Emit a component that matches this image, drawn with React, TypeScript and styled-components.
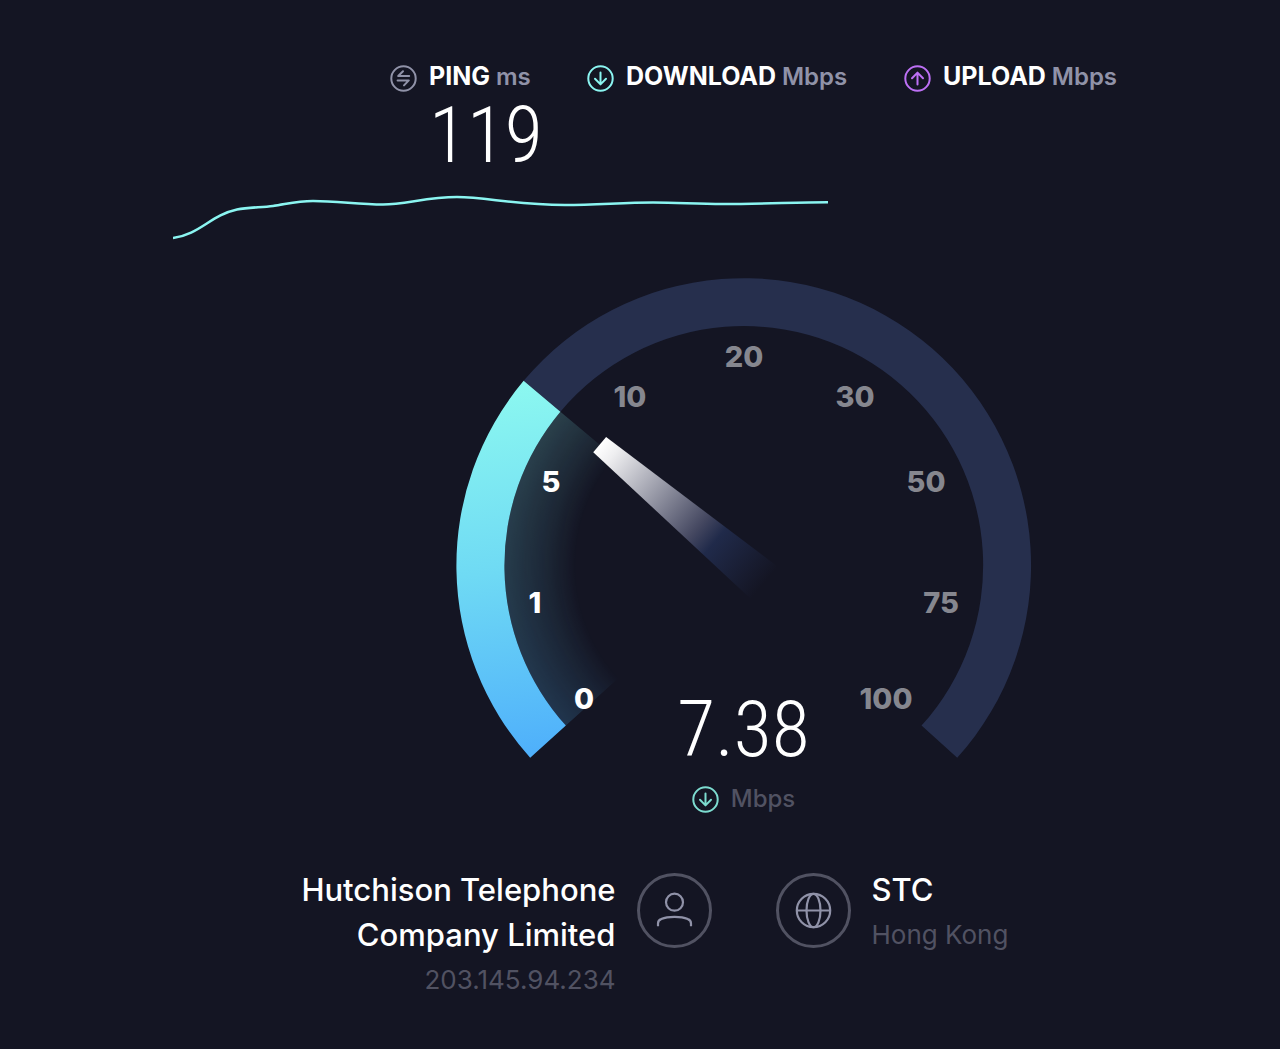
import React from "react";
import styled, { createGlobalStyle } from "styled-components";

const color = {
  bg: "#141523",
  white: "#ffffff",
  label: "#9092a8",
  muted: "#515262",
  track: "#262f4d",
  aqua: "#8bf5f1",
  teal: "#7ddcd0",
  violet: "#bd70f5",
  tick: "#86878f",
};

const GlobalStyle = createGlobalStyle`
  *, *::before, *::after { box-sizing: border-box; }
  body {
    margin: 0;
    background: ${color.bg};
    color: ${color.white};
    font-family: Inter, "Liberation Sans", sans-serif;
  }
`;

const Page = styled.main`
  display: flex;
  flex-direction: column;
  min-height: 100vh;
  padding-bottom: 40px;
  overflow: hidden;
`;

const Metrics = styled.section`
  display: grid;
  grid-template-columns: 197px 317px 213px;
  justify-content: center;
  padding: 61px 0 0 227px;
`;

const Metric = styled.div`
  display: grid;
  grid-template-columns: 27px auto;
  column-gap: 12px;
  justify-content: start;
  align-items: center;
  align-content: start;
  white-space: nowrap;

  svg {
    margin-top: 3px;
  }
`;

const MetricTitle = styled.h2`
  margin: 0;
  font-size: 25px;
  line-height: 30px;
  font-weight: 700;
`;

const MetricUnit = styled.span`
  color: ${color.label};
  font-size: 24px;
  font-weight: 600;
`;

const BigValue = styled.output`
  display: block;
  grid-column: 2;
  font-family: "Roboto Condensed", Roboto, sans-serif;
  font-size: 78px;
  line-height: 88px;
  font-weight: 300;
`;

const ChartArea = styled.section`
  padding: 8px 0 0 173px;

  svg {
    display: block;
  }
`;

const Gauge = styled.section`
  display: grid;
  justify-items: center;
  padding: 34px 0 0 207px;
`;

const Dial = styled.svg`
  grid-area: 1 / 1;
  width: 574px;
  max-width: 100%;
  overflow: visible;
`;

const Tick = styled.text<{ $reached: boolean }>`
  font-size: 29px;
  font-weight: 800;
  text-anchor: middle;
  fill: ${(p) => (p.$reached ? color.white : color.tick)};
`;

const Reading = styled.div`
  grid-area: 1 / 1;
  display: flex;
  flex-direction: column;
  align-items: center;
  padding-top: 408px;
`;

const ReadingUnit = styled.div`
  display: flex;
  align-items: center;
  gap: 12px;
  margin-top: 10px;
  font-size: 24px;
  line-height: 30px;
  font-weight: 500;
  color: ${color.muted};
`;

const Connection = styled.footer`
  display: grid;
  grid-template-columns: 1fr 1fr;
  column-gap: 64px;
  padding: 53px 0 0 207px;
`;

const Party = styled.section<{ $mirrored?: boolean }>`
  display: flex;
  flex-direction: ${(p) => (p.$mirrored ? "row-reverse" : "row")};
  align-items: flex-start;
  gap: 21px;
  text-align: ${(p) => (p.$mirrored ? "right" : "left")};
`;

const PartyIcon = styled.span`
  display: grid;
  place-items: center;
  flex: none;
  width: 75px;
  height: 75px;
  margin-top: 6px;
  border: 3px solid ${color.muted};
  border-radius: 50%;
  color: ${color.label};
`;

const PartyName = styled.h3`
  max-width: 330px;
  margin: 0;
  font-size: 31px;
  line-height: 45px;
  font-weight: 500;
`;

const PartyDetail = styled.p`
  margin: 0;
  font-size: 26px;
  line-height: 45px;
  color: ${color.muted};
`;

function ArrowIcon({ stroke, up = false }: { stroke: string; up?: boolean }) {
  return (
    <svg width="27" height="27" viewBox="0 0 27 27" fill="none" stroke={stroke} strokeWidth="2" aria-hidden="true">
      <circle cx="13.5" cy="13.5" r="12.2" />
      <path
        d={up ? "M13.5 19.5V8M8 13.2 13.5 7.6 19 13.2" : "M13.5 7.5V19M8 13.8 13.5 19.4 19 13.8"}
        strokeLinecap="round"
        strokeLinejoin="round"
      />
    </svg>
  );
}

function PingIcon() {
  return (
    <svg width="27" height="27" viewBox="0 0 27 27" fill="none" stroke={color.label} strokeWidth="2" aria-hidden="true">
      <circle cx="13.5" cy="13.5" r="12.2" />
      <path
        d="M13 6.2 8.2 11H19.2M7.6 15.4H18.8L14 20.4"
        strokeLinecap="round"
        strokeLinejoin="round"
      />
    </svg>
  );
}

function UserIcon() {
  return (
    <svg width="37" height="37" viewBox="0 0 37 37" fill="none" stroke="currentColor" strokeWidth="2.2" aria-hidden="true">
      <circle cx="18.5" cy="10.2" r="8.5" />
      <path d="M2 34.2V31.5Q2 28.2 5.2 27.1C12 24 25 24 31.8 27.1Q35 28.2 35 31.5V34.2" />
    </svg>
  );
}

function GlobeIcon() {
  return (
    <svg width="37" height="37" viewBox="0 0 37 37" fill="none" stroke="currentColor" strokeWidth="2.2" aria-hidden="true">
      <circle cx="18.5" cy="18.5" r="16.7" />
      <ellipse cx="18.5" cy="18.5" rx="7" ry="16.7" />
      <path d="M1.8 18.5H35.2" />
    </svg>
  );
}

const CX = 286.7;
const CY = 287.5;
const OUTER = 287.3;
const INNER = 239.3;
const START = 222;
const NEEDLE = 140;

function polar(r: number, degrees: number) {
  const a = (degrees * Math.PI) / 180;
  return `${(CX + r * Math.cos(a)).toFixed(2)} ${(CY - r * Math.sin(a)).toFixed(2)}`;
}

function ring(from: number, to: number, outer: number, inner: number) {
  const large = from - to > 180 ? 1 : 0;
  return `M${polar(outer, from)}A${outer} ${outer} 0 ${large} 1 ${polar(outer, to)}L${polar(inner, to)}A${inner} ${inner} 0 ${large} 0 ${polar(inner, from)}Z`;
}

const ticks = [
  { value: 0, x: 127, y: 431 },
  { value: 1, x: 78, y: 335 },
  { value: 5, x: 94, y: 214 },
  { value: 10, x: 173, y: 129 },
  { value: 20, x: 287, y: 89 },
  { value: 30, x: 398, y: 129 },
  { value: 50, x: 469, y: 214 },
  { value: 75, x: 484, y: 335 },
  { value: 100, x: 429, y: 431 },
];

const speed = 7.38;

export default function App() {
  return (
    <>
      <GlobalStyle />
      <Page>
        <Metrics>
          <Metric>
            <PingIcon />
            <MetricTitle>
              PING <MetricUnit>ms</MetricUnit>
            </MetricTitle>
            <BigValue>119</BigValue>
          </Metric>
          <Metric>
            <ArrowIcon stroke={color.aqua} />
            <MetricTitle>
              DOWNLOAD <MetricUnit>Mbps</MetricUnit>
            </MetricTitle>
          </Metric>
          <Metric>
            <ArrowIcon stroke={color.violet} up />
            <MetricTitle>
              UPLOAD <MetricUnit>Mbps</MetricUnit>
            </MetricTitle>
          </Metric>
        </Metrics>

        <ChartArea>
          <svg width="656" height="56" viewBox="0 0 656 56" fill="none" role="img" aria-label="Download speed over time">
            <path
              d="M0 50C26 47 38 27 64 21.5C76 19 88 19.6 100 18C114 16 124 13 140 13C164 13 186 16.5 210 16.5C232 16.5 254 9 284 9C314 9 340 17 392 17C424 17 450 14.5 480 14.5C506 14.5 522 16 550 16C586 16 620 14.5 655 14.2"
              stroke={color.aqua}
              strokeWidth="2.6"
            />
          </svg>
        </ChartArea>

        <Gauge>
          <Dial viewBox="0 0 574 481" role="img" aria-label="Download speed gauge">
            <defs>
              <linearGradient id="arc" gradientUnits="userSpaceOnUse" x1="60" y1="105" x2="110" y2="470">
                <stop offset="0" stopColor="#8cf8f0" />
                <stop offset="0.5" stopColor="#6fdaf4" />
                <stop offset="1" stopColor="#4fb0fb" />
              </linearGradient>
              <radialGradient id="fade" gradientUnits="userSpaceOnUse" cx={CX} cy={CY} r={INNER}>
                <stop offset="0.7" stopColor="#fff" stopOpacity="0" />
                <stop offset="0.82" stopColor="#fff" stopOpacity="0.09" />
                <stop offset="1" stopColor="#fff" stopOpacity="0.2" />
              </radialGradient>
              <mask id="glow" maskUnits="userSpaceOnUse" x="0" y="0" width="574" height="481">
                <rect width="574" height="481" fill="url(#fade)" />
              </mask>
              <linearGradient id="needle" gradientUnits="userSpaceOnUse" x1="-188" y1="0" x2="27" y2="0">
                <stop offset="0" stopColor="#fff" />
                <stop offset="0.08" stopColor="#eeeef0" />
                <stop offset="0.6" stopColor="#444760" />
                <stop offset="0.7" stopColor="#202a4a" />
                <stop offset="1" stopColor={color.bg} />
              </linearGradient>
            </defs>
            <path d={ring(NEEDLE, -42, OUTER, INNER)} fill={color.track} />
            <path d={ring(START, NEEDLE, INNER, 150)} fill="url(#arc)" mask="url(#glow)" />
            <path d={ring(START, NEEDLE, OUTER, INNER)} fill="url(#arc)" />
            <g transform={`translate(${CX} ${CY}) rotate(${180 - NEEDLE})`}>
              <path d="M-188 -10 27 -21V21L-188 10Z" fill="url(#needle)" />
            </g>
            {ticks.map((t) => (
              <Tick key={t.value} x={t.x} y={t.y} $reached={t.value <= speed}>
                {t.value}
              </Tick>
            ))}
          </Dial>
          <Reading>
            <BigValue>{speed}</BigValue>
            <ReadingUnit>
              <ArrowIcon stroke={color.teal} />
              Mbps
            </ReadingUnit>
          </Reading>
        </Gauge>

        <Connection>
          <Party $mirrored>
            <PartyIcon>
              <UserIcon />
            </PartyIcon>
            <div>
              <PartyName>Hutchison Telephone Company Limited</PartyName>
              <PartyDetail>203.145.94.234</PartyDetail>
            </div>
          </Party>
          <Party>
            <PartyIcon>
              <GlobeIcon />
            </PartyIcon>
            <div>
              <PartyName>STC</PartyName>
              <PartyDetail>Hong Kong</PartyDetail>
            </div>
          </Party>
        </Connection>
      </Page>
    </>
  );
}
